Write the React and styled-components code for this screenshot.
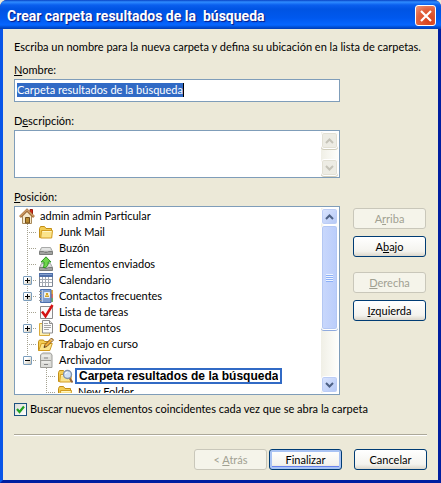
import React, { useState } from "react";
import styled, { createGlobalStyle, css } from "styled-components";

const folders = [
  { name: "Junk Mail", icon: "folder" },
  { name: "Buzón", icon: "tray" },
  { name: "Elementos enviados", icon: "sent" },
  { name: "Calendario", icon: "calendar", toggle: "+" },
  { name: "Contactos frecuentes", icon: "contacts", toggle: "+" },
  { name: "Lista de tareas", icon: "tasks" },
  { name: "Documentos", icon: "documents", toggle: "+" },
  { name: "Trabajo en curso", icon: "work" },
  { name: "Archivador", icon: "cabinet", toggle: "-", last: true },
];

const folderShape = (
  <>
    <path d="M1.5 13.5V4.5l1-2h4l1.5 2h5.5v9z" fill="#f3cd55" stroke="#c38e16" />
    <path d="M3.5 6.5h11l-.8 7.5h-11z" fill="#fbe48b" stroke="#d29c20" />
    <path d="M4.5 7.5h9" stroke="#fff6c4" />
  </>
);

const trayShape = (
  <>
    <path d="M3.5 7.5h9l2 4h-13z" fill="#d5d7d5" stroke="#a9aaa9" />
    <path d="M1.5 11.5h4l1 1h3l1-1h4v3h-13z" fill="#a0a2a0" stroke="#7c7e7c" />
    <path d="M4 9h8" stroke="#f1f1f1" />
  </>
);

const icons = {
  home: (
    <>
      <path d="M11 1.5h2.5v5L11 4z" fill="#d42a16" stroke="#991a10" />
      <path d="M3.5 8v7.5h9V8L8 3.5z" fill="#f5e7ca" stroke="#a98a5c" />
      <path d="M1 9l7-7 7 7" fill="none" stroke="#a8703c" strokeWidth="2.6" />
      <path d="M1 8.6l7-7 7 7" fill="none" stroke="#e2b680" />
      <path d="M6.5 15V9.5h4V15z" fill="#b98a31" stroke="#76501d" />
    </>
  ),
  folder: folderShape,
  tray: trayShape,
  sent: (
    <>
      {trayShape}
      <path
        d="M8 .8l5 5.2h-2.7c0 3-1 4.5-2.8 5.5H5c1-1.3 1.2-3 1-5.5H3z"
        fill="#6fd64c"
        stroke="#2f9322"
      />
    </>
  ),
  calendar: (
    <>
      <path d="M1.5 1.5h13v13h-13z" fill="#fff" stroke="#7e8794" />
      <path d="M1 1h14v4H1z" fill="#4f6fa8" />
      <path d="M2 2.5h12" stroke="#87a2cf" />
      <path d="M4.5 5v9M7.5 5v9M10.5 5v9M2 7.5h12M2 10.5h12" stroke="#a5abb3" />
    </>
  ),
  contacts: (
    <>
      <path d="M13 2h2v4h-2z" fill="#e7aa3b" />
      <path d="M13 6h2v4h-2z" fill="#d7705b" />
      <path d="M13 10h2v4h-2z" fill="#6eae62" />
      <path d="M2.5 1.5h10.5v13H2.5z" fill="#7f9ed0" stroke="#4c6fab" />
      <path d="M4.5 2v12" stroke="#b9cdee" />
      <path d="M6.5 4.5h5v5h-5z" fill="#fdf3c4" stroke="#e4edfa" />
      <path d="M8 5h2v2H8zM7 7.5h4V9H7z" fill="#d0a12c" />
      <path d="M1 3.5h3M1 6.5h3M1 9.5h3M1 12.5h3" stroke="#999" />
    </>
  ),
  tasks: (
    <>
      <path d="M2.5 2.5h12v12h-12z" fill="#fafafa" stroke="#8c8c8c" />
      <path d="M4 7.5l3.5 4.8L14.5 1" fill="none" stroke="#d51313" strokeWidth="2.5" />
    </>
  ),
  documents: (
    <>
      <path d="M1.5 3.5h10v12h-10z" fill="#fdf0b2" stroke="#d8ab3e" />
      <path d="M4.5.5h7l3 3v9.5h-10z" fill="#fbfbfb" stroke="#8d8d8d" />
      <path d="M11.5.5v3h3" fill="#e1e1e1" stroke="#8d8d8d" />
      <path d="M6 3.5h4M6 5.5h7M6 7.5h7M6 9.5h5" stroke="#a6a6a6" />
    </>
  ),
  work: (
    <>
      <path d="M.5 14.5v-9l1-1.5h4l1 1.5h5v9z" fill="#f3cd55" stroke="#c38e16" />
      <path d="M.8 14.5l2.5-7h11l-2.5 7z" fill="#fbe48b" stroke="#d29c20" />
      <path d="M6 11.5l1-3L13.5 2l2 2L9 10.5z" fill="#efaa35" stroke="#7d5722" />
      <path d="M12.5 3l2 2" stroke="#d9d9d9" />
      <path d="M6 11.5l.5-1.5 1 1z" fill="#333" />
    </>
  ),
  cabinet: (
    <>
      <path d="M2.5 3l2-2h8l1.5 2v12.5H2.5z" fill="#dcdcd8" stroke="#9c9c98" />
      <path d="M3 8.5h10" stroke="#9c9c98" />
      <path d="M4 4h8M4 10h8" stroke="#f8f8f6" />
      <path d="M6 6h4M6 12.5h4" stroke="#858585" />
    </>
  ),
  search: (
    <>
      {folderShape}
      <path d="M12.5 10l3 4.5" stroke="#96643a" strokeWidth="2" />
      <circle cx="10.5" cy="6.5" r="4" fill="#cfe0f5" stroke="#8293ab" strokeWidth="1.4" />
      <path d="M8.5 6a2 2 0 0 1 2-2" fill="none" stroke="#fff" />
    </>
  ),
};

function Icon({ name }) {
  return (
    <IconSvg viewBox="0 0 16 16" aria-hidden="true">
      {icons[name]}
    </IconSvg>
  );
}

function Chevron({ up }) {
  return (
    <svg width="9" height="6" viewBox="0 0 9 6" aria-hidden="true">
      <path
        d={up ? "M1 5l3.5-3.5L8 5" : "M1 1l3.5 3.5L8 1"}
        fill="none"
        stroke="currentColor"
        strokeWidth="2"
      />
    </svg>
  );
}

function ScrollBar({ disabled, children }) {
  return (
    <Scroll>
      <ScrollButton type="button" disabled={disabled} aria-label="Subir">
        <Chevron up />
      </ScrollButton>
      <Track>{children}</Track>
      <ScrollButton type="button" disabled={disabled} aria-label="Bajar">
        <Chevron />
      </ScrollButton>
    </Scroll>
  );
}

export default function App() {
  const [name, setName] = useState("Carpeta resultados de la búsqueda");
  const [checked, setChecked] = useState(true);

  return (
    <>
      <GlobalStyle />
      <Dialog>
        <TitleBar>
          <Title>Crear carpeta resultados de la{"  "}búsqueda</Title>
          <CloseButton type="button" aria-label="Cerrar">
            <svg width="12" height="12" viewBox="0 0 12 12" aria-hidden="true">
              <path d="M1 1l10 10M11 1L1 11" stroke="#fff" strokeWidth="2.2" />
            </svg>
          </CloseButton>
        </TitleBar>
        <Body>
          <Intro>
            Escriba un nombre para la nueva carpeta y defina su ubicación en la
            lista de carpetas.
          </Intro>
          <Columns>
            <Field>
              <Label htmlFor="nombre">
                <u>N</u>ombre:
              </Label>
              <NameBox>
                <NameInput
                  id="nombre"
                  value={name}
                  onChange={(e) => setName(e.target.value)}
                />
              </NameBox>
            </Field>
            <Field>
              <Label htmlFor="descripcion">
                D<u>e</u>scripción:
              </Label>
              <DescriptionBox>
                <Description id="descripcion" />
                <ScrollBar disabled />
              </DescriptionBox>
            </Field>
            <Field>
              <Label as="span" id="posicion">
                <u>P</u>osición:
              </Label>
              <TreeBox>
                <Tree aria-labelledby="posicion">
                  <Row>
                    <Icon name="home" />
                    <RowText>admin admin Particular</RowText>
                  </Row>
                  {folders.map((f) => (
                    <Row key={f.name}>
                      <Branch $last={f.last}>
                        {f.toggle && (
                          <Toggle type="button" aria-label={f.name}>
                            <svg width="7" height="7" viewBox="0 0 7 7">
                              <path
                                d={f.toggle === "+" ? "M1 3.5h5M3.5 1v5" : "M1 3.5h5"}
                                stroke="#000"
                              />
                            </svg>
                          </Toggle>
                        )}
                      </Branch>
                      <Icon name={f.icon} />
                      <RowText>{f.name}</RowText>
                    </Row>
                  ))}
                  <Row>
                    <Indent />
                    <Branch />
                    <Icon name="search" />
                    <Rename
                      aria-label="Nombre de la carpeta"
                      value={name}
                      onChange={(e) => setName(e.target.value)}
                    />
                  </Row>
                  <Row>
                    <Indent />
                    <Branch />
                    <Icon name="folder" />
                    <RowText>New Folder</RowText>
                  </Row>
                </Tree>
                <ScrollBar>
                  <Thumb>
                    <Grip />
                  </Thumb>
                </ScrollBar>
              </TreeBox>
            </Field>
            <Moves>
              <Button type="button" disabled>
                A<u>r</u>riba
              </Button>
              <Button type="button">
                A<u>b</u>ajo
              </Button>
              <Button type="button" disabled $apart>
                <u>D</u>erecha
              </Button>
              <Button type="button">
                <u>I</u>zquierda
              </Button>
            </Moves>
          </Columns>
          <CheckLabel>
            <Check
              type="checkbox"
              checked={checked}
              onChange={(e) => setChecked(e.target.checked)}
            />
            Buscar nuevos elementos coincidentes cada vez que se abra la carpeta
          </CheckLabel>
          <Divider />
          <Footer>
            <Button type="button" disabled>
              &lt; <u>A</u>trás
            </Button>
            <Button type="button" $primary>
              Finalizar
            </Button>
            <CancelButton type="button">Cancelar</CancelButton>
          </Footer>
        </Body>
      </Dialog>
    </>
  );
}

const GlobalStyle = createGlobalStyle`
  * {
    box-sizing: border-box;
  }
  body {
    margin: 0;
    background: #ece9d8;
    color: #000;
    font-family: Lato, "Liberation Sans", sans-serif;
    font-size: 11px;
    line-height: 16px;
  }
  button, input, textarea {
    font: inherit;
    color: inherit;
    margin: 0;
    padding: 0;
  }
`;

const Dialog = styled.div`
  display: flex;
  flex-direction: column;
  min-height: 100vh;
  background: #0a1c9c;
  border-radius: 7px 7px 0 0;
  overflow: hidden;
`;
const TitleBar = styled.header`
  display: flex;
  align-items: center;
  justify-content: space-between;
  height: 29px;
  padding: 2px 5px 0 7px;
  background: linear-gradient(
    #0842c4 0,
    #2f8cff 2px,
    #0a5fee 5px,
    #0054e3 9px,
    #0058ee 18px,
    #0666ff 25px,
    #0050d8 27px,
    #003cb4 29px
  );
`;
const Title = styled.h1`
  margin: 0;
  color: #fff;
  font-family: Roboto, "Liberation Sans", sans-serif;
  font-size: 14px;
  font-weight: 700;
  white-space: pre;
  text-shadow: 1px 1px 1px #0a1883;
`;
const CloseButton = styled.button`
  display: grid;
  place-items: center;
  width: 21px;
  height: 21px;
  border: 1px solid #fff;
  border-radius: 3px;
  background: radial-gradient(circle at 70% 80%, #d8401a, #e2633f 60%, #ef9a80);
`;
const Body = styled.main`
  flex: 1;
  display: flex;
  flex-direction: column;
  border: solid #0831d9;
  border-width: 0 3px 3px;
  border-color: #0831d9 #001ea0 #001ea0 #0855e8;
  padding: 10px 11px;
  background: #ece9d8;
`;
const Intro = styled.p`
  margin: 0 0 7px;
  white-space: nowrap;
`;
const Columns = styled.div`
  display: grid;
  grid-template-columns: 1fr 74px;
  column-gap: 13px;
  row-gap: 11px;
`;
const Field = styled.div`
  grid-column: 1;
  display: flex;
  flex-direction: column;
  gap: 1px;
`;
const Label = styled.label`
  display: block;
`;
const box = css`
  display: flex;
  border: 1px solid #7f9db9;
  background: #fff;
`;
const NameBox = styled.div`
  ${box}
  height: 23px;
  padding: 3px 2px;
`;
const NameInput = styled.input`
  flex: 0 1 auto;
  field-sizing: content;
  height: 14px;
  border: 0;
  border-right: 1px solid #000;
  outline: 0;
  background: #316ac5;
  color: #fff;
`;
const DescriptionBox = styled.div`
  ${box}
  height: 48px;
  padding: 1px;
`;
const Description = styled.textarea`
  flex: 1;
  min-width: 0;
  border: 0;
  outline: 0;
  resize: none;
  background: transparent;
`;
const TreeBox = styled.div`
  ${box}
  height: 189px;
  padding: 1px;
`;
const Tree = styled.ul`
  flex: 1;
  min-width: 0;
  margin: 0;
  padding: 0 0 0 2px;
  list-style: none;
  overflow: hidden;
`;
const Row = styled.li`
  display: flex;
  align-items: center;
  height: 16px;
`;
const IconSvg = styled.svg`
  flex: none;
  width: 16px;
  height: 16px;
  margin: 0 5px 0 1px;
`;
const RowText = styled.span`
  white-space: nowrap;
`;
const Indent = styled.span`
  flex: none;
  width: 19px;
`;
const Branch = styled.span`
  flex: none;
  display: grid;
  justify-content: center;
  align-content: end;
  width: 19px;
  height: 16px;
  padding-bottom: 3px;
  background-image: repeating-linear-gradient(#a5a290 0 1px, transparent 1px 2px),
    repeating-linear-gradient(90deg, #a5a290 0 1px, transparent 1px 2px);
  background-repeat: no-repeat;
  background-position: 9px 0, 9px 8px;
  background-size: 1px ${(props) => (props.$last ? "8px" : "16px")}, 10px 1px;
`;
const Toggle = styled.button`
  display: grid;
  place-items: center;
  width: 9px;
  height: 9px;
  border: 1px solid #7b9ebd;
  border-radius: 1px;
  background: linear-gradient(135deg, #fff 30%, #c8c2b2);
`;
const Rename = styled.input`
  width: 207px;
  height: 16px;
  margin-left: -3px;
  padding: 0 2px;
  border: 2px solid #316ac5;
  outline: 0;
  background: #fff;
  font-family: "Liberation Sans", Arial, sans-serif;
  font-size: 12px;
  font-weight: 700;
  line-height: 12px;
`;
const Scroll = styled.div`
  display: flex;
  flex-direction: column;
  flex: none;
  width: 17px;
  background: linear-gradient(90deg, #f0efe6, #fefefb);
`;
const ScrollButton = styled.button`
  display: grid;
  place-items: center;
  height: 17px;
  border: 1px solid #fff;
  border-radius: 3px;
  background: linear-gradient(135deg, #dbe5fe, #b4c8f6);
  box-shadow: inset 0 0 0 1px #bccdf5;
  color: #4d6185;

  &:disabled {
    background: #edece4;
    box-shadow: inset 0 0 0 1px #e2e0d4, 0 1px 0 #d0cdbb;
    color: #c5c3b8;
  }
`;
const Track = styled.div`
  flex: 1;
`;
const Thumb = styled.div`
  display: grid;
  place-items: center;
  height: 105px;
  border: 1px solid #fff;
  border-radius: 3px;
  background: linear-gradient(90deg, #c9d8fc, #bacdfb);
  box-shadow: inset 0 0 0 1px #b3c7f3, 0 1px 0 #8faade;
`;
const Grip = styled.span`
  width: 7px;
  height: 8px;
  background: repeating-linear-gradient(#eef4fe 0 1px, #8cb0f8 1px 2px);
`;
const Moves = styled.div`
  grid-column: 2;
  grid-row: 3;
  display: flex;
  flex-direction: column;
  gap: 7px;
  padding-top: 19px;
`;
const Button = styled.button`
  width: 73px;
  height: 21px;
  margin-top: ${(props) => (props.$apart ? "8px" : "0")};
  border: 1px solid #003c74;
  border-radius: 3px;
  background: linear-gradient(#fff, #f4f3ee 75%, #dcd7cb);
  box-shadow: ${(props) =>
    props.$primary ? "inset 0 0 0 2px #a9c3f3, inset 0 -3px 0 #6982ee" : "none"};

  &:disabled {
    border-color: #c9c7ba;
    background: #f5f4ea;
    color: #a1a192;
  }
`;
const CheckLabel = styled.label`
  display: flex;
  align-items: center;
  gap: 3px;
  margin-top: 6px;
  white-space: nowrap;
`;
const Check = styled.input`
  appearance: none;
  flex: none;
  width: 13px;
  height: 13px;
  border: 1px solid #1c5180;
  background: linear-gradient(135deg, #dcdcd7, #fff);

  &:checked {
    background: url("data:image/svg+xml,%3Csvg xmlns='http://www.w3.org/2000/svg' viewBox='0 0 11 11'%3E%3Cpath d='M2 5l2.5 3L9 2.5' fill='none' stroke='%2321a121' stroke-width='2.2'/%3E%3C/svg%3E"),
      linear-gradient(135deg, #dcdcd7, #fff);
  }
`;
const Divider = styled.hr`
  width: 100%;
  height: 2px;
  margin: 17px 0 13px;
  border: 0;
  border-top: 1px solid #aca899;
  border-bottom: 1px solid #fff;
`;
const Footer = styled.footer`
  display: flex;
  justify-content: flex-end;
  gap: 2px;
`;
const CancelButton = styled(Button)`
  margin-left: 10px;
`;
